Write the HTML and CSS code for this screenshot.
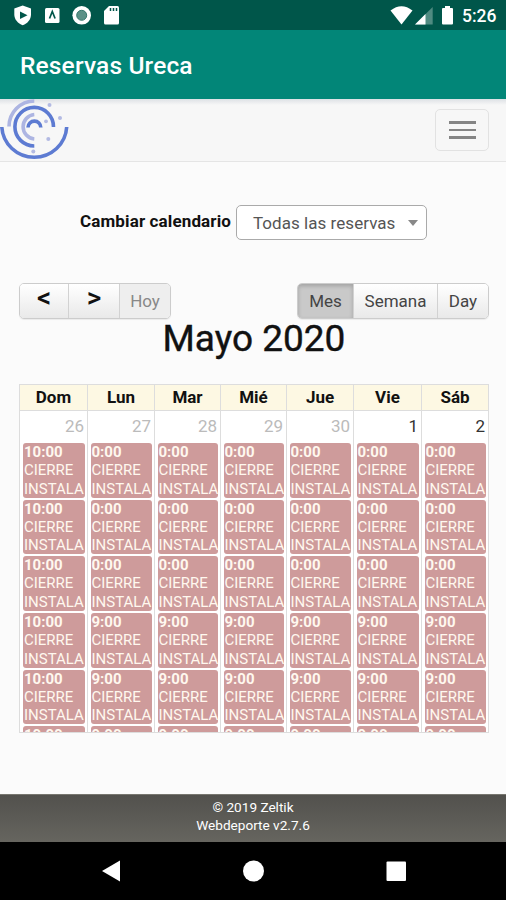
FILE: index.html
```html
<!DOCTYPE html>
<html lang="es">
<head>
<meta charset="utf-8">
<title>Reservas Ureca</title>
<link rel="stylesheet" href="styles.css">
</head>
<body>
<div class="status">
  <svg class="status-left" width="130" height="30" viewBox="0 0 130 30" fill="#fff">
    <path d="M22.700 5.500L31 8.600V14.500C31 19.500 27.500 23.500 22.700 25.200C18 23.500 14.300 19.500 14.300 14.500V8.600Z"/>
    <path d="M20 11.500L27.500 15.200L20 18.900Z" fill="#00564a"/>
    <rect x="45" y="8" width="14.500" height="15" rx="1.500"/>
    <path d="M49.500 18.500L52.300 11.500L55.100 18.500" fill="none" stroke="#00564a" stroke-width="1.700"/>
    <circle cx="81.700" cy="15.300" r="9.300"/>
    <circle cx="81.700" cy="15.300" r="5" fill="#5b9187" stroke="#35776c"/>
    <path d="M109 6H117.500Q119 6 119 7.500V23Q119 24.500 117.500 24.500H105.500Q104 24.500 104 23V11Z"/>
    <path d="M110.500 8v3M113.500 8v3M116.500 8v3" stroke="#00564a" stroke-width="1.500"/>
  </svg>
  <svg class="status-right" width="72" height="30" viewBox="0 0 72 30" fill="#fff">
    <path d="M.5 10.500Q11.500 2 22.500 10.500L11.500 24.500Z"/>
    <path d="M42.700 7V24.500H25Z" fill="#4f8b81"/>
    <path d="M35.500 14V24.500H25Z"/>
    <path d="M55 6h5v2h2q1 0 1 1V23.500q0 1-1 1H53q-1 0-1-1V9q0-1 1-1h2z"/>
  </svg>
  <span class="clock">5:26</span>
</div>
<header class="appbar">Reservas Ureca</header>
<nav class="navbar">
  <svg class="logo" width="70" height="62" viewBox="0 99 70 62" fill="none" stroke="#5d7bd2" stroke-width="3.600">
    <path d="M1.800 127A32.500 32 0 0 0 66.700 127"/>
    <path d="M9 126.500A25.500 25.500 0 0 1 34.300 101" stroke="#adb5e2"/>
    <path d="M53.500 127A19.300 19.300 0 1 0 34.300 146"/>
    <path d="M34.300 114.500A12.300 12.300 0 0 0 34.300 139" stroke="#adb5e2"/>
    <path d="M28 127.500A6.400 6.400 0 0 1 40.800 127.500"/>
    <g fill="#b3bae3" stroke="none"><circle cx="49.500" cy="105" r="2"/><circle cx="60" cy="118" r="2"/><circle cx="46" cy="121.300" r="1.900"/><circle cx="48.300" cy="139" r="2"/><circle cx="33.300" cy="151.500" r="2"/></g>
  </svg>
  <div class="toggle"><i></i><i></i><i></i></div>
</nav>
<main>
  <div class="filter">
    <b>Cambiar calendario</b>
    <div class="select"><span>Todas las reservas</span><i></i></div>
  </div>
  <div class="toolbar">
    <div class="group">
      <div class="btn prev">&lt;</div><div class="btn next">&gt;</div><div class="btn today">Hoy</div>
    </div>
    <div class="group">
      <div class="btn month">Mes</div><div class="btn week">Semana</div><div class="btn day">Day</div>
    </div>
  </div>
  <h2><span>Mayo 2020</span></h2>
  <div class="calendar" id="calendar"></div>
</main>
<footer>© 2019 Zeltik<br>Webdeporte v2.7.6</footer>
<div class="softkeys">
  <svg width="506" height="58" viewBox="0 842 506 58" fill="#fff"><path d="M102 871L120 860.500V881.500Z"/><circle cx="253.500" cy="871" r="10.500"/><rect x="386.500" y="861.500" width="19.500" height="19.500" rx="1"/></svg>
</div>
<script src="calendar.js"></script>
</body>
</html>
```
FILE: styles.css
```css
* { box-sizing: border-box; }
body { margin: 0; width: 506px; height: 900px; overflow: hidden; background: #fbfbfb; color: #111; font-family: Roboto, "Liberation Sans", sans-serif; display: flex; flex-direction: column; }
svg { display: block; flex: none; }
.status { height: 30px; background: #00564a; display: flex; justify-content: space-between; flex: none; }
.status-right { margin-left: auto; }
.clock { width: 44px; color: #fff; font-size: 17.500px; font-weight: 500; line-height: 32px; }
.appbar { height: 69px; flex: none; background: #028678; color: #fff; font-size: 24.500px; font-weight: 500; line-height: 71px; padding-left: 20px; letter-spacing: .15px; }
.navbar { height: 63px; flex: none; background: linear-gradient(#dde1e5, #f7f7f7 6px); border-bottom: 1px solid #e5e5e5; display: flex; justify-content: space-between; padding-right: 17px; }
.toggle { width: 54px; height: 42px; margin-top: 10px; border: 1px solid #e2e2e2; border-radius: 5px; display: flex; flex-direction: column; align-items: center; justify-content: center; gap: 5px; }
.toggle i { width: 27px; height: 2.400px; background: #858585; }
main { height: 632px; flex: none; padding: 43px 17px 0 19px; }
.filter { height: 35px; display: flex; align-items: center; padding-left: 61px; font-size: 17px; }
.filter b { width: 156px; line-height: 32px; height: 35px; font-weight: 700; white-space: nowrap; letter-spacing: .13px; }
.select { width: 191px; height: 35px; border: 1px solid #aaa; border-radius: 5px; background: #fff; display: flex; align-items: center; justify-content: space-between; padding: 0 8px 0 16px; color: #555; white-space: nowrap; letter-spacing: .04px; }
.select i { border: 5px solid transparent; border-top: 6px solid #888; border-bottom: 0; }
.toolbar { margin-top: 43px; height: 36px; display: flex; justify-content: space-between; }
.group { display: flex; border: 1px solid #ccc; border-radius: 5px; overflow: hidden; box-shadow: 0 1px 1px #0001; }
.btn { display: flex; align-items: center; justify-content: center; font-size: 17px; color: #444; background: linear-gradient(#fff, #e9e9e9); border-left: 1px solid #d2d2d2; }
.btn:first-child { border-left: 0; }
.prev, .next { font-size: 28px; font-weight: 500; color: #111; line-height: 27px; padding-bottom: 7px; }
.prev { width: 48px; }
.next { width: 51px; }
.today { width: 51px; background: #eee; color: #888; }
.month { width: 55px; background: #c9c9c9; box-shadow: inset 0 2px 4px #0003; }
.week { width: 84px; }
.day { width: 51px; }
h2 { margin: 0; height: 65px; font-size: 37px; line-height: 40px; font-weight: 400; text-align: center; color: #111; -webkit-text-stroke: .4px #111; }
.calendar { height: 349px; width: 470px; overflow: hidden; display: grid; grid-template-columns: 67px 67px 66px 66px 67px 68px 67px; border: 1px solid #ddd; background: #fff; font-size: 17px; }
.col { border-left: 1px solid #ddd; overflow: hidden; }
.col:first-child { border-left: 0; }
.name { height: 26px; line-height: 25px; background: #fdf8e3; border-bottom: 1px solid #ddd; text-align: center; font-weight: 700; }
.date { height: 32px; line-height: 31px; padding-right: 3px; text-align: right; color: #bbb; }
.date.current { color: #333; }
.event { height: 54.500px; margin: 0 2.500px 2.200px; padding-left: 1px; border-radius: 3px; background: #ce9b9b; color: #fff8ef; font-size: 15px; line-height: 18.700px; overflow: hidden; white-space: nowrap; }
.col:first-child .event { margin-left: 3px; }
.event b { display: block; line-height: 18px; }
footer { height: 48px; flex: none; background: linear-gradient(#52514d, #66655f); border-top: 1px solid #77766f; color: #fff; text-align: center; font-size: 13.600px; line-height: 18px; padding-top: 2.500px; }
.softkeys { height: 58px; background: #000; flex: none; }
```
FILE: calendar.js
```js
const days = [["Dom", 26], ["Lun", 27], ["Mar", 28], ["Mié", 29], ["Jue", 30], ["Vie", 1], ["Sáb", 2]];
document.getElementById("calendar").innerHTML = days.map(([name, date], d) => {
  const events = [0, 1, 2, 3, 4, 5].map(i => {
    const time = d === 0 ? "10:00" : i < 3 ? "0:00" : "9:00";
    const label = i < 5 ? "CIERRE<br>INSTALA" : "";
    return `<div class="event"><b>${time}</b>${label}</div>`;
  }).join("");
  return `<div class="col"><div class="name">${name}</div><div class="date${date < 10 ? " current" : ""}">${date}</div>${events}</div>`;
}).join("");
```
